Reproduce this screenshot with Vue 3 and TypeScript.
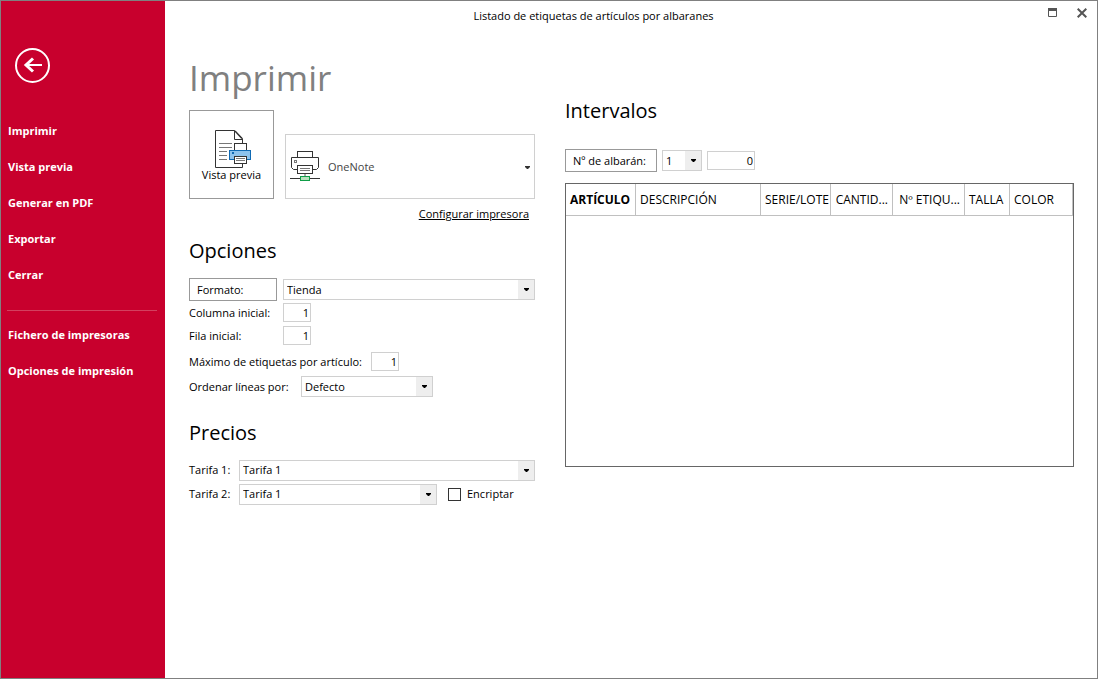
<script setup lang="ts">
import { ref } from 'vue'

interface Column {
  key: string
  label: string
  width?: number
  sorted?: boolean
  numeric?: boolean
}

const actions: string[] = ['Imprimir', 'Vista previa', 'Generar en PDF', 'Exportar', 'Cerrar']
const settings: string[] = ['Fichero de impresoras', 'Opciones de impresión']

const columns: Column[] = [
  { key: 'articulo', label: 'ARTÍCULO', width: 70, sorted: true },
  { key: 'descripcion', label: 'DESCRIPCIÓN', width: 125 },
  { key: 'serie', label: 'SERIE/LOTE', width: 70 },
  { key: 'cantidad', label: 'CANTID...', width: 62, numeric: true },
  { key: 'etiquetas', label: 'Nº ETIQU...', width: 72, numeric: true },
  { key: 'talla', label: 'TALLA', width: 45 },
  { key: 'color', label: 'COLOR' },
]

const rates: string[] = ['Tarifa 1', 'Tarifa 2']

const printer = ref('OneNote')
const format = ref('Tienda')
const firstColumn = ref('1')
const firstRow = ref('1')
const maxLabels = ref('1')
const order = ref('Defecto')
const rate1 = ref('Tarifa 1')
const rate2 = ref('Tarifa 1')
const encrypt = ref(false)
const series = ref('1')
const noteNumber = ref('0')
</script>

<template>
  <div class="window">
    <aside class="sidebar">
      <button class="back" type="button" aria-label="Volver">
        <svg width="35" height="35" viewBox="0 0 35 35" fill="none" stroke="#fff">
          <circle cx="17.5" cy="17.5" r="16.5" stroke-width="2" />
          <path d="M27 17H11" stroke-width="2" />
          <path d="M18 10.5L11 17L18 23.5" stroke-width="3" />
        </svg>
      </button>
      <nav class="menu">
        <button v-for="item in actions" :key="item" type="button" class="menu-item">{{ item }}</button>
        <hr class="divider" />
        <button v-for="item in settings" :key="item" type="button" class="menu-item">{{ item }}</button>
      </nav>
    </aside>

    <div class="body">
      <header class="titlebar">
        <span class="title">Listado de etiquetas de artículos por albaranes</span>
        <div class="window-buttons">
          <button type="button" aria-label="Maximizar">
            <svg width="10" height="10" viewBox="0 0 10 10">
              <path d="M.5 1V8.5H8.5V1" fill="none" stroke="#555" />
              <path d="M0 0H9V3H0Z" fill="#555" />
            </svg>
          </button>
          <button type="button" aria-label="Cerrar ventana">
            <svg width="10" height="10" viewBox="0 0 10 10">
              <path d="M.7 .7L9.3 9.3M9.3 .7L.7 9.3" fill="none" stroke="#555" stroke-width="2" />
            </svg>
          </button>
        </div>
      </header>

      <main class="content">
        <section class="print">
          <h1>Imprimir</h1>

          <div class="printer-row">
            <button type="button" class="preview">
              <svg width="36" height="38" viewBox="0 0 36 38" fill="none">
                <path d="M27.5 13V8.5L19.5 .5H.5V37.5H27.5V33M19.5 .5V9.5H27.5" stroke="#333" />
                <path d="M20 1L27 8.5" stroke="#333" stroke-width="1.5" />
                <path d="M4 13.5H17M4 17.5H17M4 21.5H12M4 25.5H12M4 29.5H12" stroke="#777" />
                <rect x="19.5" y="13.5" width="12" height="7" fill="#fff" stroke="#333" />
                <rect x="14.5" y="20.5" width="21" height="9" fill="#8cc3ee" stroke="#0f6ab4" />
                <rect x="17" y="22" width="2" height="2" fill="#0f6ab4" />
                <rect x="19.5" y="26.5" width="12" height="7" fill="#fff" stroke="#333" />
                <path d="M21 28.5H30M21 30.5H30" stroke="#777" />
              </svg>
              <span>Vista previa</span>
            </button>
            <div class="printer">
              <svg class="printer-icon" width="30" height="30" viewBox="0 0 30 30" fill="none">
                <rect x="7.5" y=".5" width="15" height="6" stroke="#333" />
                <path d="M7.5 18.5H3.5L1.5 16.5V6.5H28.5V16.5L26.5 18.5H22.5" stroke="#333" />
                <rect x="4.5" y="9.5" width="2" height="2" stroke="#777" />
                <rect x="7.5" y="14.5" width="15" height="8" fill="#fff" stroke="#333" />
                <path d="M10 17.5H20M10 19.5H20" stroke="#777" />
                <path d="M15 23V25" stroke="#aaa" stroke-width="2" />
                <path d="M0 27.5H30" stroke="#333" />
                <rect x="10.5" y="25.5" width="9" height="4" fill="#b8e0bd" stroke="#0f9d48" />
              </svg>
              <select v-model="printer" aria-label="Impresora">
                <option>OneNote</option>
              </select>
              <svg class="printer-arrow" width="5" height="3" viewBox="0 0 5 3"><path d="M0 0H5V1L3 3H2L0 1Z" fill="#333" /></svg>
            </div>
          </div>
          <a class="configure" href="#">Configurar impresora</a>

          <h2>Opciones</h2>
          <div class="field tall">
            <button type="button" class="boxed format-button">Formato:</button>
            <div class="combo grow">
              <select v-model="format" aria-label="Formato">
                <option>Tienda</option>
              </select>
              <span class="drop"><svg width="5" height="3" viewBox="0 0 5 3"><path d="M0 0H5V1L3 3H2L0 1Z" /></svg></span>
            </div>
          </div>
          <div class="field">
            <label for="first-column" class="wide-label">Columna inicial:</label>
            <input id="first-column" v-model="firstColumn" type="text" class="number" />
          </div>
          <div class="field">
            <label for="first-row" class="wide-label">Fila inicial:</label>
            <input id="first-row" v-model="firstRow" type="text" class="number" />
          </div>
          <div class="spaced-fields">
            <div class="field spaced">
              <label for="max-labels" class="max-label">Máximo de etiquetas por artículo:</label>
              <input id="max-labels" v-model="maxLabels" type="text" class="number" />
            </div>
            <div class="field spaced">
              <label for="order" class="order-label">Ordenar líneas por:</label>
              <div class="combo order">
                <select id="order" v-model="order">
                  <option>Defecto</option>
                </select>
                <span class="drop"><svg width="5" height="3" viewBox="0 0 5 3"><path d="M0 0H5V1L3 3H2L0 1Z" /></svg></span>
              </div>
            </div>
          </div>

          <h2 class="prices">Precios</h2>
          <div class="field rate">
            <label for="rate-1" class="rate-label">Tarifa 1:</label>
            <div class="combo grow">
              <select id="rate-1" v-model="rate1">
                <option v-for="rate in rates" :key="rate">{{ rate }}</option>
              </select>
              <span class="drop"><svg width="5" height="3" viewBox="0 0 5 3"><path d="M0 0H5V1L3 3H2L0 1Z" /></svg></span>
            </div>
          </div>
          <div class="field rate">
            <label for="rate-2" class="rate-label">Tarifa 2:</label>
            <div class="combo second-rate">
              <select id="rate-2" v-model="rate2">
                <option v-for="rate in rates" :key="rate">{{ rate }}</option>
              </select>
              <span class="drop"><svg width="5" height="3" viewBox="0 0 5 3"><path d="M0 0H5V1L3 3H2L0 1Z" /></svg></span>
            </div>
            <label class="check">
              <input v-model="encrypt" type="checkbox" />
              <span>Encriptar</span>
            </label>
          </div>
        </section>

        <section class="ranges">
          <h2>Intervalos</h2>
          <div class="range-row">
            <button type="button" class="boxed note-button">Nº de albarán:</button>
            <div class="combo series">
              <select v-model="series" aria-label="Serie">
                <option>1</option>
              </select>
              <span class="drop"><svg width="5" height="3" viewBox="0 0 5 3"><path d="M0 0H5V1L3 3H2L0 1Z" /></svg></span>
            </div>
            <input v-model="noteNumber" type="text" class="number note" aria-label="Número de albarán" />
          </div>
          <div class="grid">
            <table>
              <colgroup>
                <col v-for="column in columns" :key="column.key" :style="{ width: column.width ? column.width + 'px' : 'auto' }" />
              </colgroup>
              <thead>
                <tr>
                  <th v-for="column in columns" :key="column.key" scope="col" :class="{ sorted: column.sorted, numeric: column.numeric }">
                    {{ column.label }}
                  </th>
                </tr>
              </thead>
            </table>
          </div>
        </section>
      </main>
    </div>
  </div>
</template>

<style>
body {
  margin: 0;
}
</style>

<style scoped>
.window,
.window * {
  box-sizing: border-box;
}

.window {
  display: flex;
  min-height: 100vh;
  border: 1px solid #808080;
  background: #fff;
  color: #000;
  font-family: "Open Sans", "Noto Sans", sans-serif;
  font-size: 11px;
  line-height: 16px;
}

button,
input,
select {
  margin: 0;
  padding: 0;
  border: 0;
  border-radius: 0;
  background: none;
  color: inherit;
  font: inherit;
}

svg {
  display: block;
}

.sidebar {
  flex: none;
  width: 164px;
  padding: 47px 8px 0 6px;
  background: #c8002d;
  color: #fff;
}

.back {
  display: block;
  margin-left: 8px;
}

.menu {
  display: flex;
  flex-direction: column;
  margin-top: 30px;
}

.menu-item {
  height: 36px;
  padding-left: 1px;
  text-align: left;
  font-weight: 700;
}

.divider {
  width: 100%;
  height: 1px;
  margin: 17px 0 6px;
  border: 0;
  background: #d3405f;
}

.body {
  display: flex;
  flex: 1;
  flex-direction: column;
  min-width: 0;
}

.titlebar {
  display: flex;
  height: 30px;
}

.title {
  flex: 1;
  padding-top: 7px;
  padding-right: 26px;
  text-align: center;
}

.window-buttons {
  display: flex;
  align-items: flex-start;
  gap: 19px;
  padding: 7px 10px 0 0;
}

.content {
  display: grid;
  grid-template-columns: 346px minmax(0, 1fr);
  gap: 30px;
  padding: 22px 23px 24px 24px;
}

h1,
h2 {
  margin: 0;
  font-weight: 400;
}

h1 {
  height: 57px;
  color: #808080;
  font-size: 35px;
  line-height: 50px;
}

h2 {
  font-size: 20px;
  line-height: 28px;
}

.printer-row {
  display: flex;
  align-items: flex-end;
  gap: 11px;
}

.preview {
  display: flex;
  flex-direction: column;
  align-items: center;
  width: 85px;
  height: 89px;
  padding-top: 19px;
  border: 1px solid #999;
  line-height: 14px;
}

.preview svg {
  margin-left: 2px;
}

.printer {
  position: relative;
  flex: 1;
  height: 65px;
  border: 1px solid #d0d0d0;
}

.printer select {
  width: 100%;
  height: 100%;
  padding-left: 42px;
  appearance: none;
  color: #444;
}

.printer-icon {
  position: absolute;
  top: 16px;
  left: 4px;
}

.printer-arrow {
  position: absolute;
  top: 31px;
  right: 4px;
}

.configure {
  display: block;
  margin: 7px 6px 0 auto;
  width: fit-content;
  color: #000;
}

.configure + h2 {
  margin: 15px 0 13px;
}

.field {
  display: flex;
  align-items: center;
  height: 23px;
}

.field.tall {
  gap: 6px;
}

.spaced-fields {
  padding-top: 2px;
}

.field.spaced {
  height: 25px;
}

.field.rate {
  height: 24px;
}

.boxed {
  height: 23px;
  padding: 0 7px;
  border: 1px solid #999;
  text-align: left;
}

.format-button {
  width: 88px;
}

.note-button {
  width: 92px;
}

.wide-label {
  width: 94px;
}

.max-label {
  width: 182px;
}

.order-label {
  width: 112px;
}

.rate-label {
  width: 50px;
}

.number {
  width: 28px;
  height: 19px;
  padding-right: 1px;
  border: 1px solid #d0d0d0;
  text-align: right;
}

.combo {
  display: flex;
  position: relative;
  height: 21px;
  border: 1px solid #d0d0d0;
}

.combo select {
  width: 100%;
  height: 100%;
  padding-left: 3px;
  appearance: none;
}

.drop {
  display: flex;
  position: absolute;
  top: 0;
  right: 0;
  bottom: 0;
  align-items: center;
  justify-content: center;
  width: 16px;
  background: #eee;
  pointer-events: none;
}

.grow {
  flex: 1;
}

.order {
  width: 132px;
}

.prices {
  margin: 20px 0 11px;
}

.second-rate {
  width: 198px;
}

.check {
  display: flex;
  align-items: center;
  gap: 6px;
  margin-left: 11px;
}

.check input {
  width: 13px;
  height: 13px;
  border: 1px solid #333;
  appearance: none;
  background: #fff;
}

.check input:checked {
  background: #333;
}

.ranges {
  padding-top: 44px;
}

.range-row {
  display: flex;
  align-items: center;
  gap: 5px;
  margin: 24px 0 11px;
}

.series {
  width: 40px;
}

.note {
  width: 48px;
}

.grid {
  height: 284px;
  border: 1px solid #666;
}

table {
  width: 100%;
  border-spacing: 0;
  table-layout: fixed;
}

th {
  height: 32px;
  padding: 0 4px;
  overflow: hidden;
  border-right: 1px solid #c0c0c0;
  border-bottom: 1px solid #c0c0c0;
  font-size: 12px;
  font-weight: 400;
  text-align: left;
  white-space: nowrap;
}

.sorted {
  font-weight: 700;
}

.numeric {
  text-align: right;
}
</style>
